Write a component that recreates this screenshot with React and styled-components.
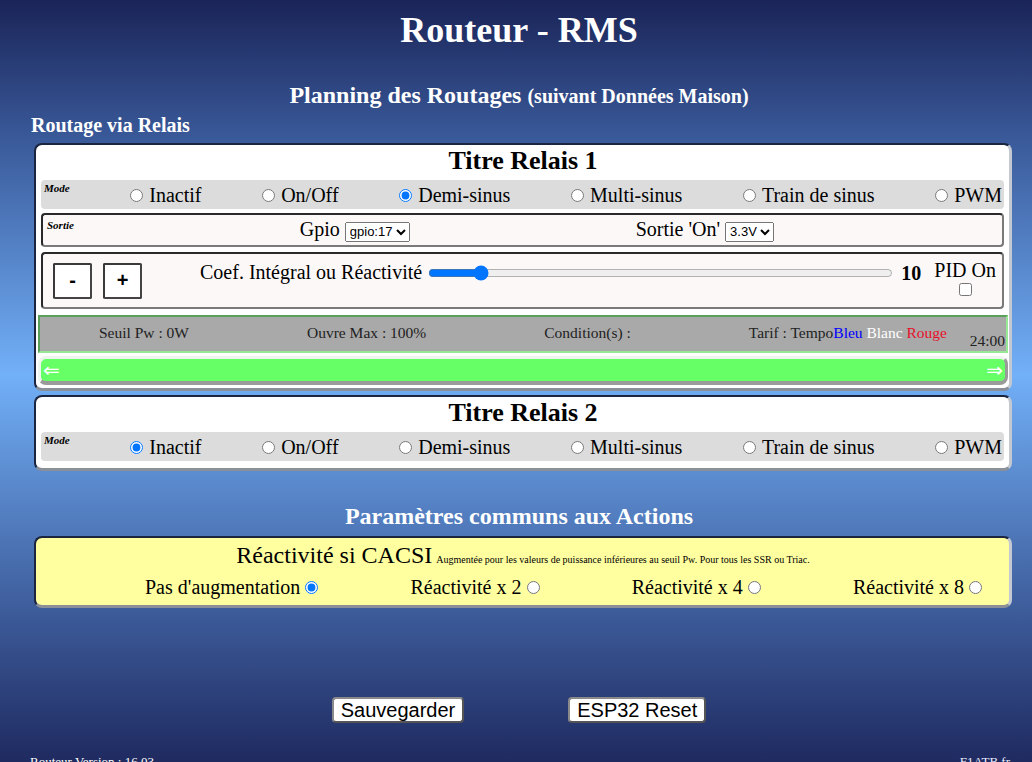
import styled, { createGlobalStyle } from "styled-components";

const GlobalStyle = createGlobalStyle`
  html, body {
    margin: 0;
    padding: 0;
  }
  body {
    font-family: "Liberation Serif", "Times New Roman", serif;
    color: white;
    background: #1b2459;
  }
`;

const modes = ["Inactif", "On/Off", "Demi-sinus", "Multi-sinus", "Train de sinus", "PWM"];
const reacts = ["Pas d'augmentation", "Réactivité x 2", "Réactivité x 4", "Réactivité x 8"];

const Page = styled.div`
  min-height: 780px;
  background: linear-gradient(#1a2458 0%, #3a5a9a 18%, #72b0f8 48%, #3c5a98 79%, #1b2459 100%);
  padding: 10px 14px 0 20px;
  box-sizing: border-box;
`;

const Title = styled.h1`
  margin: 0;
  font-size: 36px;
  line-height: 40px;
  text-align: center;
`;

const SectionTitle = styled.h2`
  margin: ${(p) => p.$top}px 0 0;
  font-size: 24px;
  line-height: 30px;
  text-align: center;
  small {
    font-size: 20px;
  }
`;

const SubTitle = styled.h3`
  margin: 2px 0 0;
  padding-left: 11px;
  font-size: 20px;
  line-height: 24px;
`;

const Card = styled.div`
  margin: ${(p) => p.$top}px 6px 0 14px;
  background: ${(p) => p.$bg || "white"};
  color: black;
  border-style: solid;
  border-width: 2px 3px 3px 2px;
  border-color: #1b2540 #c4c8d0 #8a8f98 #1b2540;
  border-radius: 8px;
  padding: 0 1px 3px 2px;
  display: flex;
  flex-direction: column;
`;

const CardTitle = styled.div`
  font-weight: bold;
  font-size: 26px;
  line-height: 32px;
  text-align: center;
`;

const SmallLabel = styled.span`
  font-size: 11px;
  font-style: italic;
  font-weight: bold;
  align-self: flex-start;
  line-height: 14px;
`;

const ModeRow = styled.div`
  margin: 3px 4px 4px 3px;
  background: #dcdcdc;
  border-radius: 4px;
  height: 29px;
  padding: 1px 2px 0 3px;
  box-sizing: border-box;
  display: flex;
  justify-content: space-between;
  align-items: center;
`;

const Choice = styled.label`
  display: flex;
  align-items: center;
  font-size: 20px;
  line-height: 24px;
  input {
    margin: 0 ${(p) => (p.$after ? "0 0 5px" : "6px 0 0")};
    width: 13px;
    height: 13px;
  }
`;

const Panel = styled.div`
  margin: 0 4px ${(p) => p.$bottom}px 3px;
  background: #fdf8f8;
  border-style: solid;
  border-width: 2px;
  border-color: #2a2a2a #7a7a7a #7a7a7a #2a2a2a;
  border-radius: 4px;
  min-height: ${(p) => p.$h}px;
  box-sizing: border-box;
  display: flex;
  align-items: ${(p) => p.$align || "center"};
  padding: ${(p) => p.$pad};
`;

const SortieRow = styled.div`
  flex: 1;
  display: flex;
  justify-content: space-between;
  align-items: center;
  font-size: 20px;
  select {
    margin-left: 5px;
    font-family: "Liberation Sans", Arial, sans-serif;
    font-size: 13px;
    height: 20px;
  }
`;

const BtnGroup = styled.div`
  display: flex;
  gap: 11px;
  align-self: center;
  margin-right: 58px;
`;

const SquareBtn = styled.button`
  width: 39px;
  height: 36px;
  background: white;
  border-style: solid;
  border-width: 2px;
  border-color: #3a3a3a #444 #444 #3a3a3a;
  border-radius: 2px;
  font-family: "Liberation Sans", Arial, sans-serif;
  font-size: 20px;
  font-weight: bold;
  color: black;
  padding: 0;
`;

const CoefLabel = styled.span`
  font-size: 20px;
  line-height: 24px;
  margin-top: 6px;
`;

const Slider = styled.input`
  flex: 1;
  margin: 11px 8px 0 6px;
  height: 16px;
`;

const Value = styled.span`
  font-weight: bold;
  font-size: 20px;
  line-height: 24px;
  margin-top: 7px;
`;

const PidBox = styled.div`
  display: flex;
  flex-direction: column;
  align-items: center;
  margin: 4px 0 0 13px;
  font-size: 20px;
  line-height: 24px;
  input {
    margin: 1px 0 0;
    width: 13px;
    height: 13px;
  }
`;

const Status = styled.div`
  position: relative;
  margin-top: 6px;
  height: 38px;
  box-sizing: border-box;
  background: #a9a9a9;
  border-style: solid;
  border-width: 2px;
  border-color: #5aa05a #96e896 #96e896 #5aa05a;
  display: flex;
  justify-content: space-around;
  align-items: center;
  padding-bottom: 3px;
  font-size: 15.5px;
  color: #222;
`;

const Tarif = styled.span`
  color: ${(p) => p.$c};
`;

const Hour = styled.span`
  position: absolute;
  right: 1px;
  bottom: 1px;
  font-size: 15.5px;
  color: #222;
`;

const Timeline = styled.div`
  margin-top: 3px;
  height: 29px;
  box-sizing: border-box;
  background: #66ff66;
  border-style: solid;
  border-width: 3px 3px 4px 3px;
  border-color: #eef5ee #9a9a9a #9a9a9a #eef5ee;
  border-radius: 8px;
  display: flex;
  justify-content: space-between;
  align-items: center;
  color: white;
  font-family: "DejaVu Sans", sans-serif;
  font-size: 20px;
  padding: 0 2px;
`;

const CacsiTitle = styled.div`
  text-align: center;
  font-size: 24px;
  line-height: 30px;
  margin-top: 2px;
  small {
    font-size: 10px;
    margin-left: 4px;
  }
`;

const ReactRow = styled.div`
  display: flex;
  justify-content: space-between;
  padding: 0 26px 3px 107px;
`;

const Actions = styled.div`
  margin-top: 89px;
  display: flex;
  justify-content: center;
  gap: 104px;
`;

const ActionBtn = styled.button`
  font-family: "Liberation Sans", Arial, sans-serif;
  font-size: 20px;
  line-height: 22px;
  padding: 0 7px;
  background: white;
  color: black;
  border-style: solid;
  border-width: 2px;
  border-color: #8a8a8a #555 #555 #8a8a8a;
  border-radius: 4px;
`;

const Footer = styled.div`
  margin-top: 31px;
  padding: 0 8px 0 10px;
  display: flex;
  justify-content: space-between;
  font-size: 13px;
  a {
    color: #e8ecff;
    text-decoration: none;
  }
`;

const ModeSelector = ({ name, value }) => (
  <ModeRow>
    <SmallLabel>Mode</SmallLabel>
    {modes.map((m) => (
      <Choice key={m}>
        <input type="radio" name={name} defaultChecked={m === value} />
        {m}
      </Choice>
    ))}
  </ModeRow>
);

const App = () => {
  return (
    <Page>
      <GlobalStyle />
      <Title>Routeur - RMS</Title>
      <SectionTitle $top={30}>
        Planning des Routages <small>(suivant Données Maison)</small>
      </SectionTitle>
      <SubTitle>Routage via Relais</SubTitle>

      <Card $top={6}>
        <CardTitle>Titre Relais 1</CardTitle>
        <ModeSelector name="mode1" value="Demi-sinus" />
        <Panel $h={34} $bottom={5} $pad="0 2px 0 4px">
          <SortieRow>
            <SmallLabel>Sortie</SmallLabel>
            <span>
              Gpio
              <select defaultValue="17">
                <option value="17">gpio:17</option>
                <option value="4">gpio:4</option>
              </select>
            </span>
            <span>
              Sortie 'On'
              <select defaultValue="3.3V">
                <option>3.3V</option>
                <option>0V</option>
              </select>
            </span>
            <span />
          </SortieRow>
        </Panel>
        <Panel $h={57} $bottom={0} $align="flex-start" $pad="0 6px 0 10px">
          <BtnGroup>
            <SquareBtn>-</SquareBtn>
            <SquareBtn>+</SquareBtn>
          </BtnGroup>
          <CoefLabel>Coef. Intégral ou Réactivité</CoefLabel>
          <Slider type="range" min="0" max="100" defaultValue="10" />
          <Value>10</Value>
          <PidBox>
            PID On
            <input type="checkbox" />
          </PidBox>
        </Panel>
        <Status>
          <span>Seuil Pw : 0W</span>
          <span>Ouvre Max : 100%</span>
          <span>Condition(s) :</span>
          <span>
            Tarif : Tempo<Tarif $c="#0000ff">Bleu</Tarif> <Tarif $c="white">Blanc</Tarif>{" "}
            <Tarif $c="#e8102a">Rouge</Tarif>
          </span>
          <Hour>24:00</Hour>
        </Status>
        <Timeline>
          <span>⇐</span>
          <span>⇒</span>
        </Timeline>
      </Card>

      <Card $top={4}>
        <CardTitle>Titre Relais 2</CardTitle>
        <ModeSelector name="mode2" value="Inactif" />
      </Card>

      <SectionTitle $top={30}>Paramètres communs aux Actions</SectionTitle>

      <Card $top={5} $bg="#ffffa0">
        <CacsiTitle>
          Réactivité si CACSI
          <small>
            Augmentée pour les valeurs de puissance inférieures au seuil Pw. Pour tous les SSR ou Triac.
          </small>
        </CacsiTitle>
        <ReactRow>
          {reacts.map((r, i) => (
            <Choice key={r} $after>
              {r}
              <input type="radio" name="cacsi" defaultChecked={i === 0} />
            </Choice>
          ))}
        </ReactRow>
      </Card>

      <Actions>
        <ActionBtn>Sauvegarder</ActionBtn>
        <ActionBtn>ESP32 Reset</ActionBtn>
      </Actions>

      <Footer>
        <span>Routeur Version : 16.03</span>
        <a href="#">F1ATB.fr</a>
      </Footer>
    </Page>
  );
};

export default App;
